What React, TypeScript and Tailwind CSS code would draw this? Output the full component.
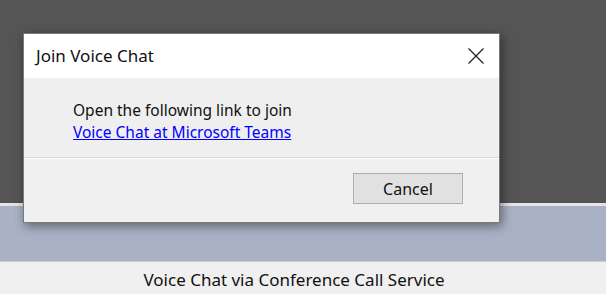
import React from "react";

export default function App() {
  const font = { fontFamily: '"Noto Sans", "Open Sans", sans-serif' };
  return (
    <div className="relative w-[606px] h-[294px] overflow-hidden flex flex-col" style={font}>
      <div className="h-[203px] bg-[#555555]" />
      <div className="h-[3px] bg-[#e4e4e4]" />
      <div className="h-[56px] bg-[#a8b2c4] border-b border-[#c8ccd4]" />
      <div className="flex-1 bg-[#f0f0f0] flex items-center justify-center pr-[18px] text-[17px] text-[#111] leading-none pt-[2px]">
        Voice Chat via Conference Call Service
      </div>

      <div className="absolute left-[23px] top-[33px] w-[477px] h-[190px] border border-[#7a7a7a] bg-[#f0f0f0] flex flex-col shadow-[2px_3px_10px_rgba(0,0,0,0.45)]">
        <div className="h-[44px] bg-white flex items-center justify-between pl-[12px] pr-[14px]">
          <span className="text-[17px] text-[#111] pb-[1px]">Join Voice Chat</span>
          <svg width="18" height="18" viewBox="0 0 18 18" className="mr-[0px]">
            <path d="M1.5 1.5 L16.5 16.5 M16.5 1.5 L1.5 16.5" stroke="#222" strokeWidth="1.3" />
          </svg>
        </div>
        <div className="h-[80px] bg-[#efefef] border-b border-[#d5d5d5] pl-[49px] pt-[21px] text-[15.5px] leading-[22px]">
          <div className="text-[#111]">Open the following link to join</div>
          <div className="text-[#0000ff] underline">Voice Chat at Microsoft Teams</div>
        </div>
        <div className="flex-1 border-t border-white flex justify-end items-start pt-[14px] pr-[36px]">
          <div className="w-[110px] h-[31px] bg-[#e1e1e1] border border-[#adadad] flex items-center justify-center text-[16px] text-[#111]">
            Cancel
          </div>
        </div>
      </div>
    </div>
  );
}
